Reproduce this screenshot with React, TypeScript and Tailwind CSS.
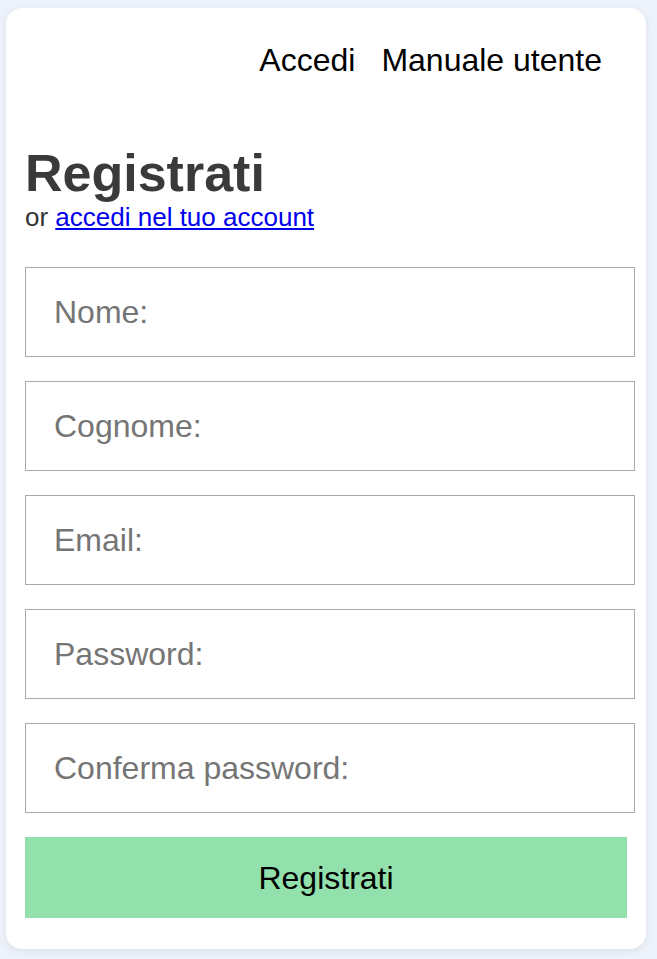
const campi = ["Nome:", "Cognome:", "Email:", "Password:", "Conferma password:"]

export default function App() {
  return (
    <div className="min-h-[959px] w-full bg-[#eef2fa] pt-2 px-[6px] pb-[10px] font-['Liberation_Sans',Arial,sans-serif]">
      <div className="w-[640px] h-[941px] bg-white rounded-2xl shadow-[0_2px_8px_rgba(0,0,0,0.08)] px-[19px]">
        <nav className="flex justify-end gap-[26px] pt-[34px] pr-[25px] text-[32px] leading-[37px] text-black">
          <a href="#">Accedi</a>
          <a href="#">Manuale utente</a>
        </nav>

        <h1 className="mt-[65px] text-[52px] leading-[58px] font-bold text-[#3a3a3a]">Registrati</h1>
        <p className="text-[26px] leading-[30px] text-[#333]">
          or <a href="#" className="text-[#0000ee] underline">accedi nel tuo account</a>
        </p>

        <form className="mt-[35px] flex flex-col gap-[24px]" onSubmit={(e) => e.preventDefault()}>
          {campi.map((c) => (
            <input
              key={c}
              type="text"
              placeholder={c}
              className="w-[610px] h-[90px] border border-[#a9a9a9] px-[28px] text-[32px] text-black placeholder:text-[#757575] outline-none"
            />
          ))}
          <button
            type="submit"
            className="w-full h-[81px] bg-[#92e0ab] text-[32px] text-black"
          >
            Registrati
          </button>
        </form>
      </div>
    </div>
  )
}
